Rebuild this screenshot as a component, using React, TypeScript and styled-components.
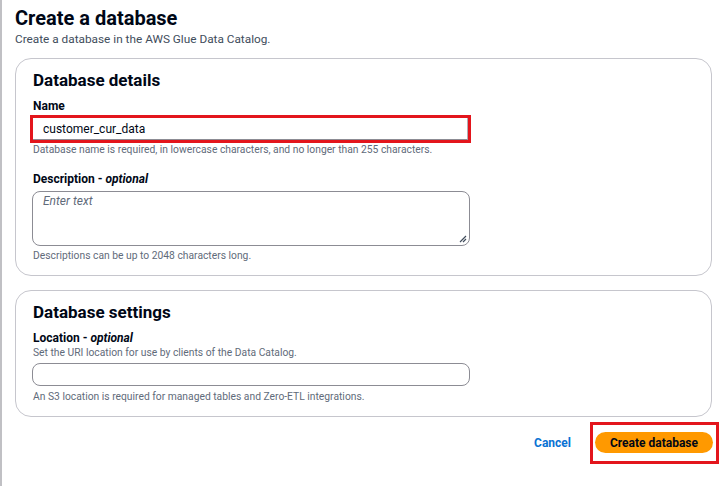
import React from "react";
import styled, { createGlobalStyle } from "styled-components";

const Global = createGlobalStyle`
  html, body { margin: 0; padding: 0; background: #ffffff; }
  body { font-family: Roboto, "Noto Sans", Arial, sans-serif; color: #000716; }
  * { box-sizing: border-box; }
`;

const Page = styled.div`
  width: 720px;
  height: 486px;
  overflow: hidden;
  border-left: 2px solid #c0c0c4;
  padding: 5px 8px 0 13px;
  display: flex;
  flex-direction: column;
  background: #ffffff;
`;

const Title = styled.h1`
  margin: 0;
  font-size: 20px;
  line-height: 26px;
  font-weight: 700;
  color: #000716;
`;

const Subtitle = styled.p`
  margin: 0;
  font-size: 11.8px;
  line-height: 16px;
  color: #414d5c;
`;

const Card = styled.section<{ $top: number; $bottom: number }>`
  margin-top: ${(p) => p.$top}px;
  border: 1px solid #c6c6cd;
  border-radius: 16px;
  padding: 9px 16px ${(p) => p.$bottom}px 17px;
  display: flex;
  flex-direction: column;
`;

const CardTitle = styled.h2`
  margin: 0;
  font-size: 17px;
  line-height: 24px;
  font-weight: 700;
  color: #000716;
`;

const Field = styled.div<{ $top?: number }>`
  margin-top: ${(p) => p.$top ?? 0}px;
  display: flex;
  flex-direction: column;
`;

const Label = styled.label`
  font-size: 12px;
  line-height: 16px;
  font-weight: 700;
  color: #000716;
  em { font-style: italic; font-weight: 700; }
`;

const Hint = styled.div<{ $top?: number }>`
  margin-top: ${(p) => p.$top ?? 0}px;
  font-size: 10.3px;
  line-height: 14px;
  color: #5f6b7a;
`;

const Highlight = styled.div`
  margin: 1px 0 0 -3px;
  width: 441px;
  border: 3px solid #e3151c;
`;

const NameInput = styled.div`
  height: 22px;
  border-bottom: 1px solid #8c8c94;
  border-right: 1px solid #b0b0b6;
  padding: 0 10px 0 10px;
  display: flex;
  align-items: center;
  font-size: 12px;
  color: #000716;
`;

const TextInput = styled.div<{ $top: number }>`
  width: 438px;
  height: 23px;
  margin: ${(p) => p.$top}px 0 0 -1px;
  border: 1px solid #8c8c94;
  border-radius: 8px;
`;

const TextArea = styled.div`
  position: relative;
  width: 438px;
  height: 55px;
  margin: 4px 0 0 -1px;
  border: 1px solid #8c8c94;
  border-radius: 8px;
  padding: 1px 10px;
  font-size: 12px;
  line-height: 16px;
  font-style: italic;
  color: #5f6b7a;
`;

const Grip = styled.svg`
  position: absolute;
  right: 2px;
  bottom: 2px;
`;

const Footer = styled.div`
  margin-top: 5px;
  display: flex;
  justify-content: flex-end;
  align-items: center;
`;

const LinkButton = styled.button`
  border: none;
  background: none;
  font-family: inherit;
  font-size: 12px;
  font-weight: 700;
  color: #0972d3;
  padding: 0;
  margin-right: 19px;
  cursor: pointer;
`;

const ButtonFrame = styled.div`
  border: 3px solid #e3151c;
  padding: 7px 3px 8px 2px;
  margin-right: -7px;
`;

const PrimaryButton = styled.button`
  display: block;
  width: 118px;
  height: 21px;
  border: none;
  border-radius: 12px;
  background: #ff9900;
  font-family: inherit;
  font-size: 12px;
  font-weight: 700;
  color: #000716;
  padding: 0;
  cursor: pointer;
`;

export default function App() {
  return (
    <>
      <Global />
      <Page>
        <Title>Create a database</Title>
        <Subtitle>Create a database in the AWS Glue Data Catalog.</Subtitle>

        <Card $top={11} $bottom={12}>
          <CardTitle>Database details</CardTitle>
          <Field $top={6}>
            <Label>Name</Label>
            <Highlight>
              <NameInput>customer_cur_data</NameInput>
            </Highlight>
            <Hint>Database name is required, in lowercase characters, and no longer than 255 characters.</Hint>
          </Field>
          <Field $top={14}>
            <Label>
              Description - <em>optional</em>
            </Label>
            <TextArea>
              Enter text
              <Grip width="10" height="10" viewBox="0 0 10 10">
                <path d="M9 3 L3 9 M9 6 L6 9" stroke="#414d5c" strokeWidth="1.2" fill="none" />
              </Grip>
            </TextArea>
            <Hint $top={3}>Descriptions can be up to 2048 characters long.</Hint>
          </Field>
        </Card>

        <Card $top={14} $bottom={12}>
          <CardTitle>Database settings</CardTitle>
          <Field $top={6}>
            <Label>
              Location - <em>optional</em>
            </Label>
            <Hint>Set the URI location for use by clients of the Data Catalog.</Hint>
            <TextInput $top={3} />
            <Hint $top={4}>An S3 location is required for managed tables and Zero-ETL integrations.</Hint>
          </Field>
        </Card>

        <Footer>
          <LinkButton>Cancel</LinkButton>
          <ButtonFrame>
            <PrimaryButton>Create database</PrimaryButton>
          </ButtonFrame>
        </Footer>
      </Page>
    </>
  );
}
